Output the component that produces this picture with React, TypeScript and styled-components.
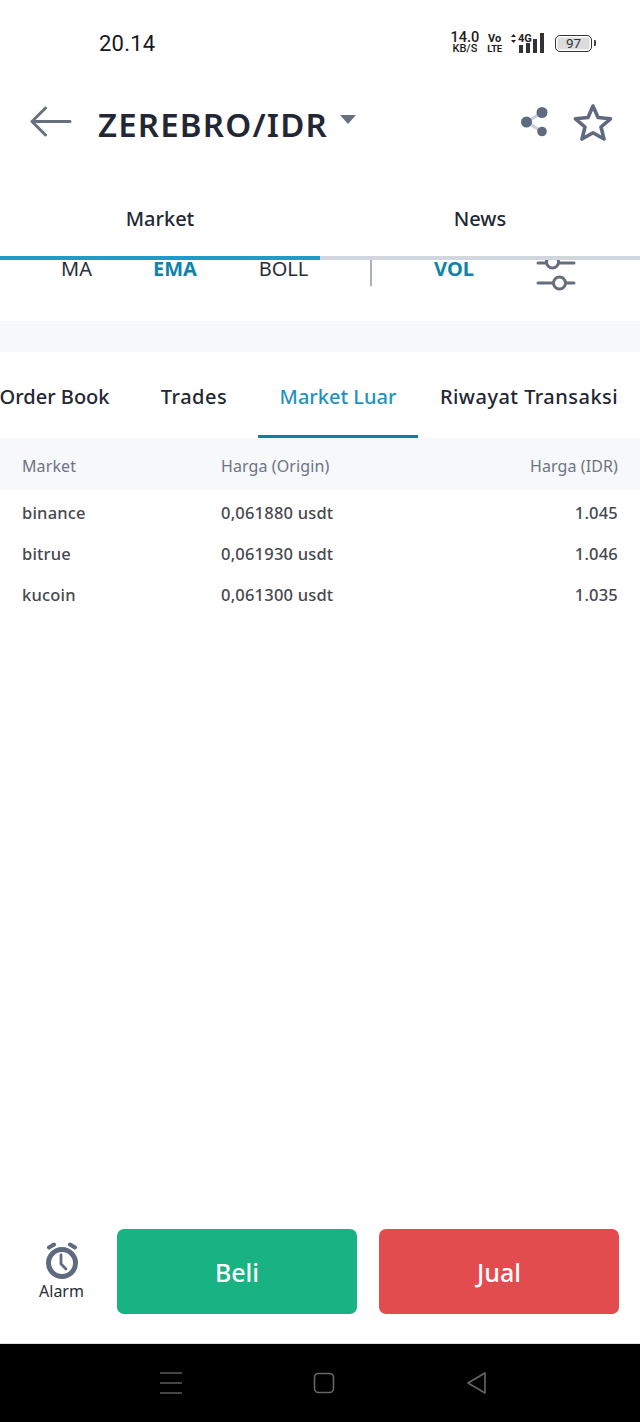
import styled, { createGlobalStyle } from "styled-components";

const GlobalStyle = createGlobalStyle`
  html, body {
    margin: 0;
    padding: 0;
    background: #fff;
  }
  body {
    font-family: "Noto Sans", "Open Sans", sans-serif;
    color: #1f2430;
  }
`;

const Page = styled.div`
  width: 640px;
  height: 1422px;
  display: flex;
  flex-direction: column;
  overflow: hidden;
`;

const StatusBar = styled.div`
  height: 86px;
  flex: none;
  display: flex;
  align-items: center;
  justify-content: space-between;
  padding: 0 48px 0 99px;
  box-sizing: border-box;
`;

const Clock = styled.span`
  font-family: "Roboto", sans-serif;
  font-size: 22px;
  letter-spacing: 0.2px;
  color: #15181f;
`;

const StatusIcons = styled.div`
  display: flex;
  align-items: center;
  gap: 8px;
  color: #1c1c1c;
`;

const Speed = styled.div`
  display: flex;
  flex-direction: column;
  align-items: center;
  font-family: "Roboto", sans-serif;
  font-weight: 500;
  line-height: 12px;
  font-size: 14.5px;
  & small {
    font-size: 11px;
    line-height: 10px;
  }
`;

const Volte = styled.div`
  display: flex;
  flex-direction: column;
  align-items: center;
  font-family: "Roboto", sans-serif;
  font-weight: 700;
  font-size: 11px;
  line-height: 11px;
  & small {
    font-size: 9.5px;
    line-height: 10px;
    letter-spacing: -0.2px;
  }
`;

const Battery = styled.div`
  width: 37px;
  height: 17px;
  box-sizing: border-box;
  border: 1.4px solid #333;
  border-radius: 5px;
  background: #dcdcdc;
  box-shadow: inset 0 0 0 1.5px #fff;
  font-family: "Roboto", sans-serif;
  font-size: 13.5px;
  line-height: 14px;
  text-align: center;
  position: relative;
  color: #333;
  &::after {
    content: "";
    position: absolute;
    right: -5px;
    top: 4px;
    width: 2px;
    height: 6px;
    background: #444;
    border-radius: 0 1px 1px 0;
  }
`;

const Header = styled.div`
  height: 72px;
  flex: none;
  display: flex;
  align-items: center;
  padding: 0 27px 0 30px;
  box-sizing: border-box;
`;

const BackIcon = styled.svg`
  width: 42px;
  height: 32px;
  margin-right: 26px;
  flex: none;
`;

const Pair = styled.h1`
  margin: 6px 0 0;
  font-size: 33px;
  line-height: 40px;
  font-weight: 600;
  letter-spacing: 1.2px;
  color: #232734;
`;

const Caret = styled.span`
  width: 0;
  height: 0;
  margin: 0 auto 6px 12px;
  border-left: 8px solid transparent;
  border-right: 8px solid transparent;
  border-top: 9px solid #68707f;
`;

const HeaderActions = styled.div`
  display: flex;
  align-items: center;
  gap: 24px;
`;

const MainTabs = styled.div`
  flex: none;
  display: grid;
  grid-template-columns: 1fr 1fr;
`;

const MainTab = styled.div<{ $active?: boolean }>`
  height: 102px;
  padding-top: 46px;
  box-sizing: border-box;
  text-align: center;
  font-size: 20px;
  line-height: 30px;
  font-weight: 500;
  color: #232734;
  border-bottom: 4px solid ${(p) => (p.$active ? "#1f9bc8" : "#d2d7df")};
`;

const IndicatorRow = styled.div`
  flex: none;
  height: 61px;
  display: flex;
  align-items: flex-start;
`;

const Indicator = styled.span<{ $active?: boolean; $w: number }>`
  flex: none;
  width: ${(p) => p.$w}px;
  height: 18px;
  display: flex;
  align-items: center;
  justify-content: center;
  font-size: 20px;
  line-height: 18px;
  font-weight: ${(p) => (p.$active ? 700 : 400)};
  color: ${(p) => (p.$active ? "#0d84ac" : "#2a2e38")};
`;

const IndicatorDivider = styled.span`
  flex: none;
  width: 2px;
  height: 26px;
  background: #a9afbb;
  margin: 0 52px 0 0;
`;

const SliderIcon = styled.svg`
  flex: none;
  width: 40px;
  height: 32px;
  margin-left: 52px;
`;

const GreyBand = styled.div`
  flex: none;
  height: 31px;
  background: #f7f8fa;
`;

const SubTabs = styled.div`
  flex: none;
  height: 86px;
  display: flex;
`;

const SubTab = styled.div<{ $active?: boolean; $w: number; $ml?: number; $ls?: number }>`
  flex: none;
  width: ${(p) => p.$w}px;
  margin-left: ${(p) => p.$ml ?? 0}px;
  box-sizing: border-box;
  display: flex;
  justify-content: center;
  padding-top: 30px;
  font-size: 20px;
  line-height: 30px;
  font-weight: 500;
  letter-spacing: ${(p) => p.$ls ?? 0}px;
  white-space: nowrap;
  color: ${(p) => (p.$active ? "#1f93bd" : "#232734")};
  border-bottom: 3px solid ${(p) => (p.$active ? "#0d7ea6" : "transparent")};
`;

const TableHead = styled.div`
  flex: none;
  height: 52px;
  box-sizing: border-box;
  padding: 3px 22px 0;
  background: #f7f8fa;
  display: grid;
  grid-template-columns: 199px 1fr auto;
  align-items: center;
  font-size: 16px;
  letter-spacing: 0.1px;
  color: #6c7483;
`;

const Rows = styled.div`
  flex: 1;
  padding-top: 2px;
`;

const Row = styled.div`
  height: 41px;
  display: grid;
  grid-template-columns: 199px 1fr auto;
  align-items: center;
  padding: 0 22px;
  font-size: 16.5px;
  letter-spacing: 0.2px;
  font-weight: 500;
  color: #45484f;
`;

const ActionBar = styled.div`
  flex: none;
  height: 129px;
  box-sizing: border-box;
  padding: 14px 21px 29px 0;
  display: flex;
  align-items: stretch;
  border-bottom: 1px solid #dfe1e5;
`;

const AlarmButton = styled.div`
  flex: none;
  width: 117px;
  padding-left: 6px;
  box-sizing: border-box;
  display: flex;
  flex-direction: column;
  align-items: center;
  justify-content: center;
  font-size: 16px;
  line-height: 20px;
  color: #2a2e38;
  gap: 1px;
`;

const TradeButton = styled.button<{ $bg: string }>`
  flex: 1;
  border: 0;
  border-radius: 7px;
  background: ${(p) => p.$bg};
  color: #fff;
  font-family: inherit;
  font-size: 25px;
  font-weight: 500;
  padding: 0;
  & + & {
    margin-left: 22px;
  }
`;

const NavBar = styled.div`
  flex: none;
  height: 78px;
  background: #000;
  display: flex;
  align-items: center;
  justify-content: center;
  gap: 130px;
  padding-left: 5px;
`;

export default function App() {
  return (
    <Page>
      <GlobalStyle />
      <StatusBar>
        <Clock>20.14</Clock>
        <StatusIcons>
          <Speed>
            14.0
            <small>KB/S</small>
          </Speed>
          <Volte>
            Vo
            <small>LTE</small>
          </Volte>
          <svg width="37" height="22" viewBox="0 0 37 22">
            <path d="M3.5 2 6 5H1zM3.5 11 1 8h5z" fill="#222" />
            <text x="8" y="10" fontFamily="Roboto, sans-serif" fontWeight="700" fontSize="11" fill="#222">
              4G
            </text>
            <rect x="9" y="13" width="4" height="8" fill="#333" />
            <rect x="16" y="11" width="4" height="10" fill="#333" />
            <rect x="23" y="7" width="4" height="14" fill="#333" />
            <rect x="30" y="1" width="4" height="20" fill="#333" />
          </svg>
          <Battery>97</Battery>
        </StatusIcons>
      </StatusBar>

      <Header>
        <BackIcon viewBox="0 0 42 32">
          <path d="M40 15.5H3M15.5 2 2 15.5 15.5 29" fill="none" stroke="#68707f" strokeWidth="3" strokeLinecap="round" strokeLinejoin="round" />
        </BackIcon>
        <Pair>ZEREBRO/IDR</Pair>
        <Caret />
        <HeaderActions>
          <svg width="30" height="32" viewBox="0 0 30 32">
            <path d="M23 6.5 7.5 16 23 25.5" fill="none" stroke="#c9cdd5" strokeWidth="3" />
            <circle cx="23" cy="6.5" r="5.5" fill="#5f6a80" />
            <circle cx="7.5" cy="16" r="5.5" fill="#5f6a80" />
            <circle cx="23" cy="25.5" r="4.8" fill="#5f6a80" />
          </svg>
          <svg width="40" height="38" viewBox="0 0 40 38">
            <path d="M20 3 25 14.5 37.5 15.8 28 24 31 36 20 29.7 9 36 12 24 2.5 15.8 15 14.5Z" fill="none" stroke="#5f6a80" strokeWidth="3.6" strokeLinejoin="round" />
          </svg>
        </HeaderActions>
      </Header>

      <MainTabs>
        <MainTab $active>Market</MainTab>
        <MainTab>News</MainTab>
      </MainTabs>

      <IndicatorRow>
        <Indicator $w={153}>MA</Indicator>
        <Indicator $active $w={44}>EMA</Indicator>
        <Indicator $w={173}>BOLL</Indicator>
        <IndicatorDivider />
        <Indicator $active $w={60}>VOL</Indicator>
        <SliderIcon viewBox="0 0 40 32">
          <g fill="none" stroke="#666d7c" strokeWidth="3" strokeLinecap="round">
            <path d="M2 3h8M23 3h15M2 23h15M30 23h8" />
            <circle cx="16.5" cy="2" r="6" />
            <circle cx="23.5" cy="23" r="6" />
          </g>
        </SliderIcon>
      </IndicatorRow>

      <GreyBand />

      <SubTabs>
        <SubTab $w={109}>Order Book</SubTab>
        <SubTab $w={128} $ml={21} $ls={0.5}>Trades</SubTab>
        <SubTab $active $w={160}>Market Luar</SubTab>
        <SubTab $w={222} $ls={0.47}>Riwayat Transaksi</SubTab>
      </SubTabs>

      <TableHead>
        <span>Market</span>
        <span>Harga (Origin)</span>
        <span>Harga (IDR)</span>
      </TableHead>

      <Rows>
        <Row>
          <span>binance</span>
          <span>0,061880 usdt</span>
          <span>1.045</span>
        </Row>
        <Row>
          <span>bitrue</span>
          <span>0,061930 usdt</span>
          <span>1.046</span>
        </Row>
        <Row>
          <span>kucoin</span>
          <span>0,061300 usdt</span>
          <span>1.035</span>
        </Row>
      </Rows>

      <ActionBar>
        <AlarmButton>
          <svg width="34" height="38" viewBox="0 0 34 38">
            <circle cx="17" cy="21" r="13.5" fill="none" stroke="#5f6a80" strokeWidth="5" />
            <path d="M16 13v9l5 5" fill="none" stroke="#5f6a80" strokeWidth="2.8" strokeLinecap="round" strokeLinejoin="round" />
            <path d="M4 5.5 9 2.5M30 5.5 25 2.5" fill="none" stroke="#5f6a80" strokeWidth="4" strokeLinecap="round" />
          </svg>
          Alarm
        </AlarmButton>
        <TradeButton $bg="#19b283">Beli</TradeButton>
        <TradeButton $bg="#e24c4e">Jual</TradeButton>
      </ActionBar>

      <NavBar>
        <svg width="24" height="24" viewBox="0 0 24 24">
          <path d="M1 2h22M1 12h22M1 22h22" stroke="#5c5c5c" strokeWidth="1.6" />
        </svg>
        <svg width="22" height="22" viewBox="0 0 22 22">
          <rect x="1.5" y="1.5" width="19" height="19" rx="4" fill="none" stroke="#666" strokeWidth="1.6" />
        </svg>
        <svg width="22" height="24" viewBox="0 0 22 24">
          <path d="M20 2 3 12l17 10Z" fill="none" stroke="#666" strokeWidth="1.6" strokeLinejoin="round" />
        </svg>
      </NavBar>
    </Page>
  );
}
